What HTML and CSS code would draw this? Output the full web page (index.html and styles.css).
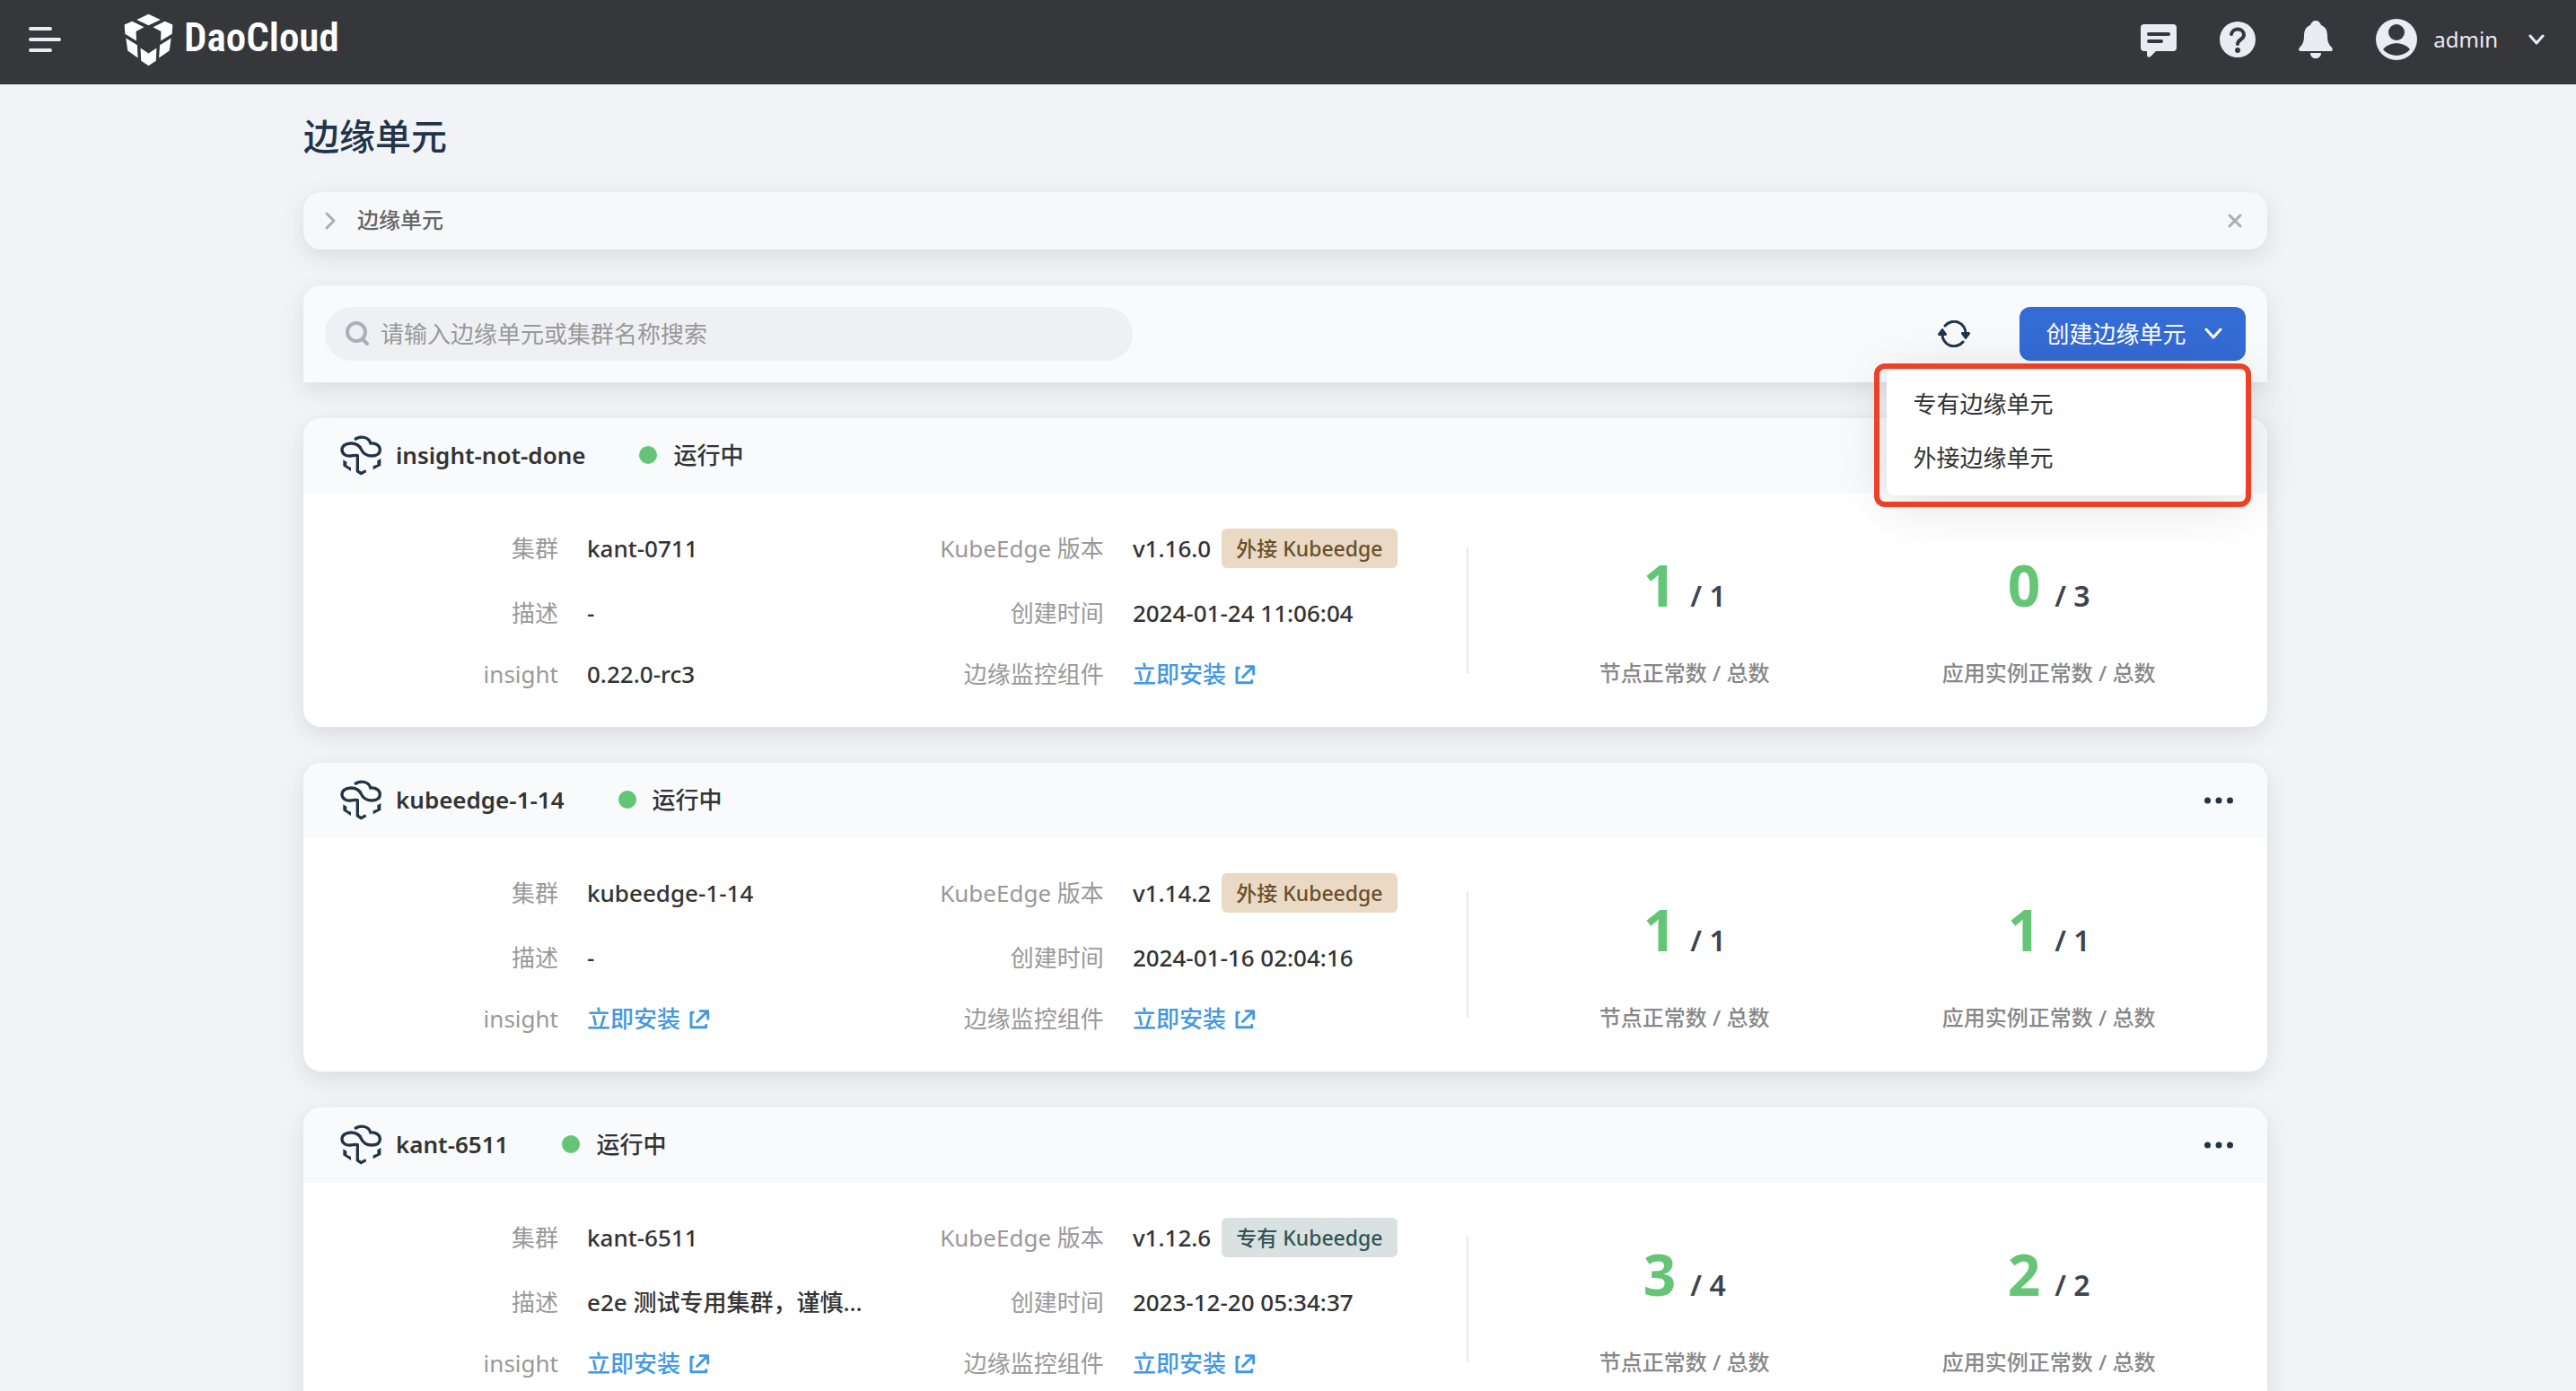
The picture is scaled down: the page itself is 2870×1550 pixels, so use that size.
FILE: index.html
```html
<!DOCTYPE html>
<html lang="zh-CN">
<head>
    <meta charset="UTF-8">
    <meta name="viewport" content="width=device-width, initial-scale=1.0">
    <title>边缘单元 - DaoCloud</title>
    <link rel="stylesheet" href="styles.css">
</head>
<body>
    <!-- Shared icons -->
    <svg class="sprite" aria-hidden="true">
        <symbol id="icon-edge" viewBox="27 30 138 138">
            <path fill="none" stroke="#22344a" stroke-width="10" stroke-linecap="round" stroke-linejoin="round" d="M79 42C96 31 124 36 128 57C149 55 160 67 160 79C160 92 149 99 132 99C111 99 103 90 97 77C91 63 77 57 63 57C44 57 33 67 33 79C33 93 47 101 62 99C73 98 77 95 85 98V150L97 158L109 151"/>
            <path fill="#22344a" d="M37 112L49 119V131L63 138V150L37 133ZM163 108L151 115V128L137 133V145L163 131Z"/>
        </symbol>
        <symbol id="icon-link" viewBox="30 33 70 68">
            <path fill="none" stroke="#4299e1" stroke-width="9" stroke-linecap="round" stroke-linejoin="round" d="M43 45H36V95H87V88M56 76L91 41M67 40H93V66"/>
        </symbol>
        <symbol id="icon-more" viewBox="0 0 64 16">
            <g fill="#22344a">
                <circle cx="7" cy="8" r="7"/>
                <circle cx="32" cy="8" r="7"/>
                <circle cx="57" cy="8" r="7"/>
            </g>
        </symbol>
    </svg>

    <header class="topbar">
        <button class="icon-btn" aria-label="菜单">
            <svg width="36" height="28" viewBox="0 0 36 28"><path stroke="#e9ecf3" stroke-width="4" stroke-linecap="round" d="M2 2H24M2 14H34M2 26H24"/></svg>
        </button>
        <a class="brand" href="#">
            <svg width="55" height="59" viewBox="414 42 166 176" fill="#fff">
                <path d="M497 43L537 62L497 81L457 62ZM416 79L442 67L482 87L455 101L456 133L418 110ZM578 79L552 67L512 87L539 101L538 133L576 110ZM421 124L459 147L461 190L427 166ZM573 124L535 147L532 190L567 166ZM470 157L497 175L524 157L522 200L497 217L472 200Z"/>
            </svg>
            <span class="brand-name">DaoCloud</span>
        </a>
        <div class="topbar-right">
            <button class="icon-btn" aria-label="消息">
                <svg width="40" height="40" viewBox="0 0 40 40">
                    <path fill="#e9ecf3" d="M4 3H36A4 4 0 0 1 40 7V29A4 4 0 0 1 36 33H17L11 39Q7 41 7 37V33H4A4 4 0 0 1 0 29V7A4 4 0 0 1 4 3Z"/>
                    <path stroke="#36373b" stroke-width="4" stroke-linecap="round" d="M9 14H31M9 22H23"/>
                </svg>
            </button>
            <button class="icon-btn" aria-label="帮助">
                <svg width="40" height="40" viewBox="0 0 40 40">
                    <circle cx="20" cy="20" r="20" fill="#e9ecf3"/>
                    <path fill="none" stroke="#36373b" stroke-width="4" stroke-linecap="round" stroke-linejoin="round" d="M13 14C15 6 27 7 27 15C27 20 20 20 20 25"/>
                    <circle cx="20" cy="32" r="3" fill="#36373b"/>
                </svg>
            </button>
            <button class="icon-btn" aria-label="通知">
                <svg width="38" height="42" viewBox="0 0 38 42" fill="#e9ecf3">
                    <path d="M19 0C22 0 24 2 25 5C30 7 32 11 32 17C32 24 34 27 37 30C39 33 37 34 36 34H2C1 34 -1 33 1 30C4 27 6 24 6 17C6 11 8 7 13 5C14 2 16 0 19 0ZM13 36H25C25 40 22 42 19 42C16 42 13 40 13 36Z"/>
                </svg>
            </button>
            <button class="user">
                <svg width="46" height="46" viewBox="0 0 46 46">
                    <circle cx="23" cy="23" r="23" fill="#e9ecf3"/>
                    <circle cx="23" cy="15" r="9" fill="#36373b"/>
                    <path fill="#36373b" d="M8 34C15 25 31 25 38 34C31 43 15 43 8 34Z"/>
                </svg>
                <span class="user-name">admin</span>
                <svg width="18" height="12" viewBox="0 0 18 12"><path fill="none" stroke="#e9ecf3" stroke-width="3" stroke-linecap="round" stroke-linejoin="round" d="M2 2L9 10L16 2"/></svg>
            </button>
        </div>
    </header>

    <main class="page">
        <h1 class="page-title">边缘单元</h1>

        <section class="banner">
            <button class="icon-btn" aria-label="展开">
                <svg width="12" height="20" viewBox="0 0 12 20"><path fill="none" stroke="#a9adb5" stroke-width="3" stroke-linecap="round" stroke-linejoin="round" d="M2 2L10 10L2 18"/></svg>
            </button>
            <span class="banner-text">边缘单元</span>
            <button class="icon-btn" aria-label="关闭">
                <svg width="16" height="16" viewBox="0 0 16 16"><path stroke="#a9adb5" stroke-width="3" stroke-linecap="round" d="M2 2L14 14M14 2L2 14"/></svg>
            </button>
        </section>

        <section class="toolbar">
            <label class="search">
                <svg width="28" height="28" viewBox="0 0 28 28"><path fill="none" stroke="#a9b0ba" stroke-width="4" stroke-linecap="round" d="M23 12a10 10 0 1 1-20 0a10 10 0 1 1 20 0M20 20L25 25"/></svg>
                <input class="search-input" type="text" aria-label="搜索" placeholder="请输入边缘单元或集群名称搜索">
            </label>
            <button class="icon-btn refresh" aria-label="刷新">
                <svg width="36" height="30" viewBox="0 0 36 30">
                    <path fill="none" stroke="#22344a" stroke-width="3" stroke-linecap="round" d="M8 6A13 13 0 0 1 31 15M28 24A13 13 0 0 1 5 15"/>
                    <path fill="#22344a" d="M5 9Q6 9 7 11L10 15Q10 17 9 17H1Q0 17 0 15L3 11Q4 9 5 9ZM31 21Q30 21 29 19L26 15Q26 13 27 13H35Q36 13 36 15L33 19Q32 21 31 21Z"/>
                </svg>
            </button>
            <div class="dropdown">
                <button class="create-btn">
                    <span>创建边缘单元</span>
                    <svg width="20" height="14" viewBox="0 0 20 14"><path fill="none" stroke="#fff" stroke-width="3" stroke-linecap="round" stroke-linejoin="round" d="M2 2L10 11L18 2"/></svg>
                </button>
                <div class="dropdown-menu">
                    <a class="dropdown-item" href="#">专有边缘单元</a>
                    <a class="dropdown-item" href="#">外接边缘单元</a>
                    <div class="highlight"></div>
                </div>
            </div>
        </section>

        <article class="card">
            <div class="card-header">
                <svg class="card-icon"><use href="#icon-edge"/></svg>
                <h2 class="card-name">insight-not-done</h2>
                <span class="status">运行中</span>
                <button class="icon-btn more" aria-label="更多"><svg width="32" height="8"><use href="#icon-more"/></svg></button>
            </div>
            <div class="card-body">
                <div class="details">
                    <dl class="fields">
                        <dt>集群</dt><dd>kant-0711</dd>
                        <dt>描述</dt><dd>-</dd>
                        <dt>insight</dt><dd>0.22.0-rc3</dd>
                    </dl>
                    <dl class="fields">
                        <dt>KubeEdge 版本</dt><dd>v1.16.0<span class="tag external">外接 Kubeedge</span></dd>
                        <dt>创建时间</dt><dd>2024-01-24 11:06:04</dd>
                        <dt>边缘监控组件</dt><dd><a class="install" href="#">立即安装<svg><use href="#icon-link"/></svg></a></dd>
                    </dl>
                </div>
                <div class="stats">
                    <div class="stat">
                        <p class="stat-value"><strong>1</strong>/ 1</p>
                        <p class="stat-label">节点正常数 / 总数</p>
                    </div>
                    <div class="stat">
                        <p class="stat-value"><strong>0</strong>/ 3</p>
                        <p class="stat-label">应用实例正常数 / 总数</p>
                    </div>
                </div>
            </div>
        </article>

        <article class="card">
            <div class="card-header">
                <svg class="card-icon"><use href="#icon-edge"/></svg>
                <h2 class="card-name">kubeedge-1-14</h2>
                <span class="status">运行中</span>
                <button class="icon-btn more" aria-label="更多"><svg width="32" height="8"><use href="#icon-more"/></svg></button>
            </div>
            <div class="card-body">
                <div class="details">
                    <dl class="fields">
                        <dt>集群</dt><dd>kubeedge-1-14</dd>
                        <dt>描述</dt><dd>-</dd>
                        <dt>insight</dt><dd><a class="install" href="#">立即安装<svg><use href="#icon-link"/></svg></a></dd>
                    </dl>
                    <dl class="fields">
                        <dt>KubeEdge 版本</dt><dd>v1.14.2<span class="tag external">外接 Kubeedge</span></dd>
                        <dt>创建时间</dt><dd>2024-01-16 02:04:16</dd>
                        <dt>边缘监控组件</dt><dd><a class="install" href="#">立即安装<svg><use href="#icon-link"/></svg></a></dd>
                    </dl>
                </div>
                <div class="stats">
                    <div class="stat">
                        <p class="stat-value"><strong>1</strong>/ 1</p>
                        <p class="stat-label">节点正常数 / 总数</p>
                    </div>
                    <div class="stat">
                        <p class="stat-value"><strong>1</strong>/ 1</p>
                        <p class="stat-label">应用实例正常数 / 总数</p>
                    </div>
                </div>
            </div>
        </article>

        <article class="card">
            <div class="card-header">
                <svg class="card-icon"><use href="#icon-edge"/></svg>
                <h2 class="card-name">kant-6511</h2>
                <span class="status">运行中</span>
                <button class="icon-btn more" aria-label="更多"><svg width="32" height="8"><use href="#icon-more"/></svg></button>
            </div>
            <div class="card-body">
                <div class="details">
                    <dl class="fields">
                        <dt>集群</dt><dd>kant-6511</dd>
                        <dt>描述</dt><dd>e2e 测试专用集群，谨慎...</dd>
                        <dt>insight</dt><dd><a class="install" href="#">立即安装<svg><use href="#icon-link"/></svg></a></dd>
                    </dl>
                    <dl class="fields">
                        <dt>KubeEdge 版本</dt><dd>v1.12.6<span class="tag dedicated">专有 Kubeedge</span></dd>
                        <dt>创建时间</dt><dd>2023-12-20 05:34:37</dd>
                        <dt>边缘监控组件</dt><dd><a class="install" href="#">立即安装<svg><use href="#icon-link"/></svg></a></dd>
                    </dl>
                </div>
                <div class="stats">
                    <div class="stat">
                        <p class="stat-value"><strong>3</strong>/ 4</p>
                        <p class="stat-label">节点正常数 / 总数</p>
                    </div>
                    <div class="stat">
                        <p class="stat-value"><strong>2</strong>/ 2</p>
                        <p class="stat-label">应用实例正常数 / 总数</p>
                    </div>
                </div>
            </div>
        </article>
    </main>
</body>
</html>
```

FILE: styles.css
```css
/* General */
* {
    box-sizing: border-box;
}

body {
    margin: 0;
    height: 100vh;
    display: flex;
    flex-direction: column;
    overflow: hidden;
    font-family: "Noto Sans", "Noto Sans CJK SC", sans-serif;
    font-size: 26px;
    line-height: 36px;
    color: #333;
    background: #f1f3f7;
}

h1, h2, p, dl, dd {
    margin: 0;
}

a {
    color: inherit;
    text-decoration: none;
}

button {
    border: 0;
    padding: 0;
    background: none;
    font: inherit;
    color: inherit;
    cursor: pointer;
}

svg {
    display: block;
    flex: none;
}

.sprite {
    display: none;
}

.icon-btn {
    display: flex;
    align-items: center;
}

/* Top bar */
.topbar {
    flex: none;
    display: flex;
    align-items: center;
    gap: 70px;
    height: 94px;
    padding: 0 35px 6px 32px;
    color: #e9ecf3;
    background: #36373b;
}

.brand {
    display: flex;
    align-items: center;
    gap: 12px;
    color: #fff;
}

.brand-name {
    font-family: "Roboto Condensed", Roboto, sans-serif;
    font-size: 45px;
    font-weight: 600;
    line-height: 50px;
    padding-bottom: 4px;
}

.topbar-right {
    display: flex;
    align-items: center;
    gap: 48px;
    margin-left: auto;
}

.user {
    display: flex;
    align-items: center;
    gap: 18px;
}

.user-name {
    margin-right: 16px;
    font-size: 24px;
}

/* Page */
.page {
    flex: 1;
    min-height: 0;
    overflow-y: auto;
    scrollbar-width: none;
    padding: 28px 12% 30px 338px;
}

.page-title {
    margin-bottom: 32px;
    font-size: 40px;
    font-weight: 500;
    line-height: 60px;
    color: #22344a;
}

.banner, .toolbar, .card {
    margin-bottom: 40px;
    border-radius: 20px;
    box-shadow: 0 8px 24px rgba(34, 34, 34, 0.11);
}

.banner {
    display: flex;
    align-items: center;
    gap: 24px;
    height: 64px;
    padding: 0 28px 0 24px;
    background: #f7f8fa;
}

.banner-text {
    flex: 1;
    padding-bottom: 2px;
    font-size: 24px;
    font-weight: 500;
    color: #666;
}

/* Toolbar */
.toolbar {
    display: flex;
    align-items: center;
    padding: 24px;
    border-radius: 20px 20px 0 0;
    background: #f9fafc;
}

.search {
    flex: 0 1 900px;
    display: flex;
    align-items: center;
    gap: 12px;
    height: 60px;
    padding: 0 22px;
    border-radius: 30px;
    background: #eff0f4;
}

.search-input {
    flex: 1;
    border: 0;
    padding: 0;
    outline: 0;
    font: inherit;
    color: #333;
    background: none;
}

.search-input::placeholder {
    color: #999;
}

.refresh {
    margin: 0 55px 0 auto;
}

.dropdown {
    position: relative;
}

.create-btn {
    display: flex;
    align-items: center;
    gap: 20px;
    height: 60px;
    padding: 0 26px 0 30px;
    border-radius: 12px;
    color: #fff;
    background: #356bd5;
}

.dropdown-menu {
    position: absolute;
    top: 70px;
    right: 0;
    z-index: 2;
    width: 400px;
    padding: 8px 0 12px;
    border-radius: 8px;
    background: #fff;
    box-shadow: 0 8px 60px rgba(0, 0, 0, 0.14);
}

.dropdown-item {
    display: block;
    padding: 0 30px;
    line-height: 60px;
}

/* Red frame round the menu */
.highlight {
    position: absolute;
    inset: -7px -6px -13px -14px;
    border: 6px solid #ee4027;
    border-radius: 12px;
    pointer-events: none;
}

/* Cards */
.card {
    overflow: hidden;
    background: #fff;
}

.card-header {
    display: flex;
    align-items: center;
    height: 84px;
    padding: 0 38px 0 41px;
    background: #f9fafc;
}

.card-icon {
    width: 46px;
    height: 46px;
    margin-right: 16px;
}

.card-name {
    padding-bottom: 2px;
    font-size: 26px;
    font-weight: 600;
}

.status {
    display: flex;
    align-items: center;
    gap: 18px;
    margin-left: 60px;
    padding-bottom: 2px;
    font-weight: 500;
}

.status::before {
    content: "";
    width: 20px;
    height: 20px;
    border-radius: 50%;
    background: #64c576;
}

.more {
    margin-left: auto;
}

.card-body {
    display: grid;
    grid-template-columns: 1296fr 892fr;
    padding: 40px 0;
}

.details {
    display: grid;
    grid-template-columns: 1fr 1fr;
    padding-right: 80px;
}

.fields {
    display: grid;
    grid-template-columns: 284px 1fr;
    grid-template-rows: 44px 36px 36px;
    align-items: center;
    gap: 32px;
    white-space: nowrap;
}

.fields dt {
    padding-bottom: 2px;
    text-align: right;
    color: #999;
}

.fields dd {
    display: flex;
    align-items: center;
    min-width: 0;
    padding-bottom: 2px;
    font-weight: 500;
}

.tag {
    margin-left: 12px;
    padding: 0 16px;
    border-radius: 6px;
    font-size: 23px;
    line-height: 44px;
}

.tag.external {
    color: #6b4f2b;
    background: #ead9c4;
}

.tag.dedicated {
    color: #325457;
    background: #d9e2e0;
}

.install {
    display: flex;
    align-items: center;
    gap: 10px;
    color: #4299e1;
}

.install svg {
    width: 23px;
    height: 23px;
}

/* Node and instance counters */
.stats {
    position: relative;
    display: grid;
    grid-template-columns: 1fr 1fr;
    padding: 0 40px;
}

.stats::before {
    content: "";
    position: absolute;
    left: 0;
    top: 20px;
    bottom: 20px;
    border-left: 2px solid #e4e7ed;
}

.stat {
    display: flex;
    flex-direction: column;
    justify-content: space-between;
    padding: 18px 0 2px;
    text-align: center;
}

.stat-value {
    font-size: 32px;
    font-weight: 600;
    line-height: 88px;
    color: #3d4451;
}

.stat-value strong {
    margin-right: 16px;
    font-size: 64px;
    font-weight: 700;
    color: #64c576;
}

.stat-label {
    font-size: 24px;
    font-weight: 500;
    color: #888;
}
```
